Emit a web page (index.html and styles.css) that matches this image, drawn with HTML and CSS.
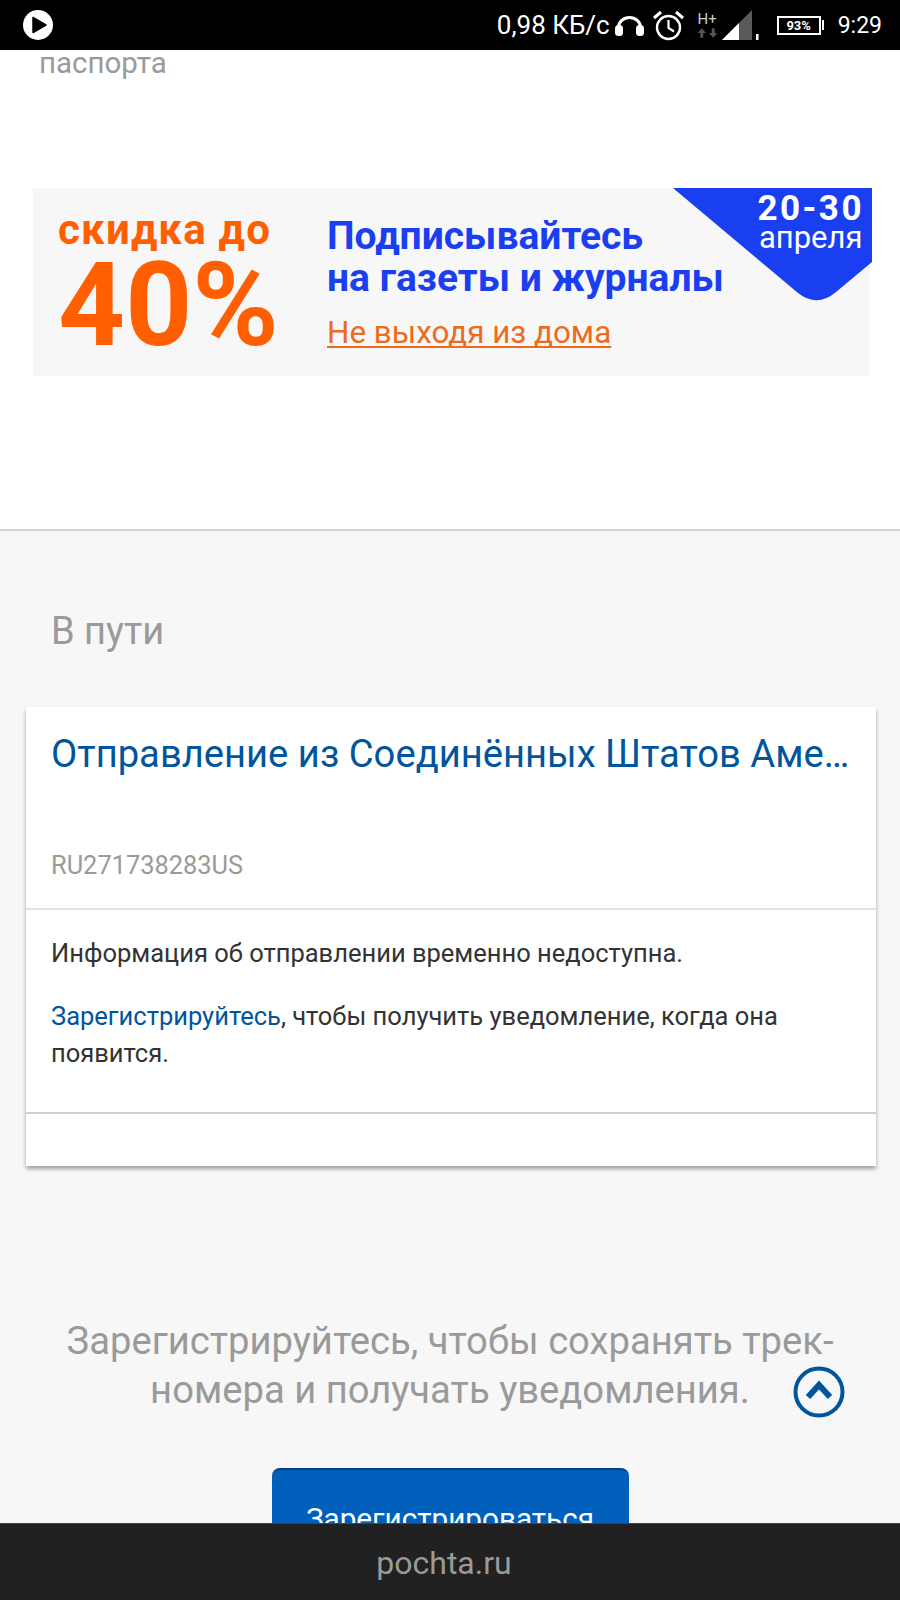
FILE: index.html
```html
<!DOCTYPE html>
<html lang="ru">
<head>
<meta charset="UTF-8" />
<meta name="viewport" content="width=device-width, initial-scale=1" />
<title>Отслеживание - pochta.ru</title>
<link rel="stylesheet" href="styles.css">
</head>
<body>

<div class="status-bar">
  <svg class="play-icon" width="30" height="30" viewBox="0 0 30 30">
    <circle cx="15" cy="15" r="15" fill="#fff"/>
    <path d="M10 7.5 L23 15 L10 22.5 Z" fill="#000" stroke="#000" stroke-width="1.5" stroke-linejoin="round"/>
  </svg>
  <div class="status-right">
    <span class="net-speed">0,98 КБ/с</span>
    <svg class="headphones" width="29" height="20" viewBox="0 0 29 20">
      <path d="M3.5 13 V11.5 A11 10 0 0 1 25.5 11.5 V13" fill="none" stroke="#fff" stroke-width="3"/>
      <rect x="0" y="9" width="8" height="11" rx="3.5" fill="#fff"/>
      <rect x="21" y="9" width="8" height="11" rx="3.5" fill="#fff"/>
    </svg>
    <svg class="alarm" width="31" height="31" viewBox="0 0 31 31">
      <circle cx="15.5" cy="17.5" r="11.5" fill="none" stroke="#fff" stroke-width="2.4"/>
      <path d="M15.5 10 V18 L21 21.5" fill="none" stroke="#fff" stroke-width="2.2"/>
      <path d="M1 8 L8 2 M30 8 L23 2" stroke="#fff" stroke-width="3"/>
    </svg>
    <div class="signal-type">
      <span>H+</span>
      <svg width="21" height="10" viewBox="0 0 22 10">
        <path d="M5 0 L9.5 5 H6.5 V10 H3.5 V5 H.5 Z M17 10 L12.5 5 H15.5 V0 H18.5 V5 H21.5 Z" fill="#555"/>
      </svg>
    </div>
    <svg class="signal" width="38" height="30" viewBox="0 0 38 30">
      <path d="M0 30 L30 0 V30 Z" fill="#5a5a5a"/>
      <path d="M0 30 L17 13 V30 Z" fill="#fff"/>
      <rect x="34" y="24" width="2.5" height="6" fill="#fff"/>
    </svg>
    <div class="battery"><span class="battery-box">93%</span><span class="battery-tip"></span></div>
    <span class="clock">9:29</span>
  </div>
</div>

<div class="page">
  <section class="top-section">
    <p class="cut-text">паспорта</p>
    <div class="banner">
      <div class="banner-discount">
        <div class="discount-label">скидка до</div>
        <div class="discount-value">40%</div>
      </div>
      <div class="banner-text">
        <div class="banner-title">Подписывайтесь<br>на газеты и журналы</div>
        <a class="banner-link" href="#">Не выходя из дома</a>
      </div>
      <div class="banner-corner">
        <svg width="199" height="114" viewBox="0 0 199 114">
          <path d="M0 0 H199 V74 L163 104 Q144 120 125 105 Z" fill="#1a3ff0"/>
        </svg>
        <div class="corner-text">
          <div class="corner-days">20-30</div>
          <div class="corner-month">апреля</div>
        </div>
      </div>
    </div>
  </section>

  <section class="track-section">
    <h2 class="section-title">В пути</h2>

    <div class="card">
      <div class="card-head">
        <div class="card-title">Отправление из Соединённых Штатов Америки</div>
        <div class="card-number">RU271738283US</div>
      </div>
      <div class="card-body">
        <p>Информация об отправлении временно недоступна.</p>
        <p><a href="#">Зарегистрируйтесь</a>, чтобы получить уведомление, когда она появится.</p>
      </div>
      <div class="card-foot"></div>
    </div>

    <div class="register">
      <p class="register-text">Зарегистрируйтесь, чтобы сохранять трек-номера и получать уведомления.</p>
      <button class="register-btn">Зарегистрироваться</button>
      <svg class="scroll-top" width="52" height="52" viewBox="0 0 52 52">
        <circle cx="26" cy="26" r="23.5" fill="none" stroke="#00559c" stroke-width="4"/>
        <path d="M15 31 L26 19 L37 31" fill="none" stroke="#00559c" stroke-width="6"/>
      </svg>
    </div>
  </section>
</div>

<div class="site-bar">pochta.ru</div>

</body>
</html>
```

FILE: styles.css
```css
html, body {
  margin: 0;
  padding: 0;
}
body {
  position: relative;
  width: 900px;
  height: 1600px;
  overflow: hidden;
  font-family: Roboto, "Liberation Sans", sans-serif;
  background: #f7f7f7;
  color: #333;
}
.status-bar {
  height: 50px;
  background: #000;
  color: #fff;
  display: flex;
  align-items: center;
  justify-content: space-between;
  padding: 0 18px 0 23px;
  box-sizing: border-box;
}
.play-icon {
  display: block;
}
.status-right {
  display: flex;
  align-items: center;
}
.net-speed {
  font-size: 26px;
  margin-right: 5px;
  white-space: nowrap;
}
.headphones {
  margin: 2px 9px 0 0;
}
.alarm {
  margin-right: 13px;
}
.signal-type {
  width: 21px;
  display: flex;
  flex-direction: column;
  align-items: center;
  font-size: 15px;
  line-height: 14px;
  color: #ccc;
  margin-right: 4px;
}
.signal-type svg {
  display: block;
  margin-top: 2px;
}
.signal {
  margin-right: 17px;
}
.battery {
  display: flex;
  align-items: center;
  margin-right: 14px;
}
.battery-box {
  width: 40px;
  height: 15px;
  border: 2px solid #fff;
  font-size: 13px;
  font-weight: 700;
  line-height: 15px;
  text-align: center;
}
.battery-tip {
  width: 2px;
  height: 10px;
  background: #fff;
  margin-left: 1px;
}
.clock {
  font-size: 23px;
}

.page {
  height: 1474px;
  overflow: hidden;
}
.top-section {
  height: 479px;
  background: #fff;
  border-bottom: 2px solid #d4d4d4;
  overflow: hidden;
}
.cut-text {
  margin: 0;
  padding-left: 39px;
  font-size: 29.5px;
  line-height: 26px;
  color: #9a9a9a;
}
.banner {
  position: relative;
  margin: 112px 0 0 33px;
  width: 837px;
  height: 188px;
  background: #f7f7f7;
  display: flex;
}
.banner-discount {
  width: 294px;
  padding: 20px 0 0 25px;
  box-sizing: border-box;
  color: #ff5f00;
  font-weight: 700;
  white-space: nowrap;
}
.discount-label {
  font-size: 42px;
  line-height: 44px;
  letter-spacing: 1.2px;
}
.discount-value {
  font-size: 117px;
  line-height: 106px;
}
.banner-text {
  padding-top: 27px;
  white-space: nowrap;
}
.banner-title {
  color: #1a3ff0;
  font-size: 39px;
  font-weight: 700;
  line-height: 42px;
}
.banner-link {
  display: inline-block;
  margin-top: 17px;
  color: #ee6a1d;
  font-size: 31.4px;
  line-height: 34px;
  text-decoration: underline;
  text-decoration-thickness: 2px;
  text-decoration-skip-ink: none;
  text-underline-offset: 3px;
}
.banner-corner {
  position: absolute;
  top: 0;
  right: -2px;
  width: 199px;
  height: 114px;
  line-height: 0;
}
.corner-text {
  position: absolute;
  top: 5px;
  right: 8px;
  color: #fff;
  text-align: center;
}
.corner-days {
  font-size: 35px;
  font-weight: 700;
  line-height: 32px;
  letter-spacing: 2.5px;
}
.corner-month {
  font-size: 31px;
  line-height: 26px;
}

.track-section {
  padding: 0 24px 0 26px;
}
.section-title {
  margin: 0;
  padding: 79px 0 0 25px;
  font-size: 38px;
  font-weight: 400;
  line-height: 42px;
  color: #9a9a9a;
}
.card {
  margin-top: 55px;
  background: #fff;
  box-shadow: 0 3px 4px rgba(0,0,0,0.35);
}
.card-head {
  height: 203px;
  padding: 26px 25px 0;
  box-sizing: border-box;
  border-bottom: 2px solid #e3e3e3;
}
.card-title {
  font-size: 38.2px;
  line-height: 42px;
  color: #00559c;
  white-space: nowrap;
  overflow: hidden;
  text-overflow: ellipsis;
}
.card-number {
  margin-top: 75px;
  font-size: 25.4px;
  line-height: 30px;
  color: #9a9a9a;
}
.card-body {
  height: 204px;
  padding: 25px 25px 0;
  box-sizing: border-box;
  border-bottom: 2px solid #cfcfcf;
  font-size: 25.5px;
  line-height: 37px;
}
.card-body p {
  margin: 0 0 26px;
}
.card-body a {
  color: #00559c;
  text-decoration: none;
}
.card-foot {
  height: 52px;
}
.register {
  position: relative;
  margin: 0 -24px 0 -26px;
  padding-top: 151px;
  text-align: center;
}
.register-text {
  margin: 0 auto;
  width: 800px;
  font-size: 38.2px;
  line-height: 49px;
  color: #9a9a9a;
}
.register-btn {
  display: block;
  margin: 53px auto 0;
  width: 357px;
  height: 98px;
  padding: 0;
  background: #0060bb;
  color: #fff;
  border: none;
  border-top: 2px solid #0a3f7c;
  border-radius: 8px;
  font-family: inherit;
  font-size: 29.7px;
  box-sizing: border-box;
}
.scroll-top {
  position: absolute;
  top: 200px;
  left: 793px;
}

.site-bar {
  position: absolute;
  top: 1523px;
  left: 0;
  width: 900px;
  height: 77px;
  padding-right: 12px;
  background: #212121;
  border-top: 1px solid #444;
  box-sizing: border-box;
  color: #9a9a9a;
  font-size: 32px;
  line-height: 78px;
  text-align: center;
}
```
